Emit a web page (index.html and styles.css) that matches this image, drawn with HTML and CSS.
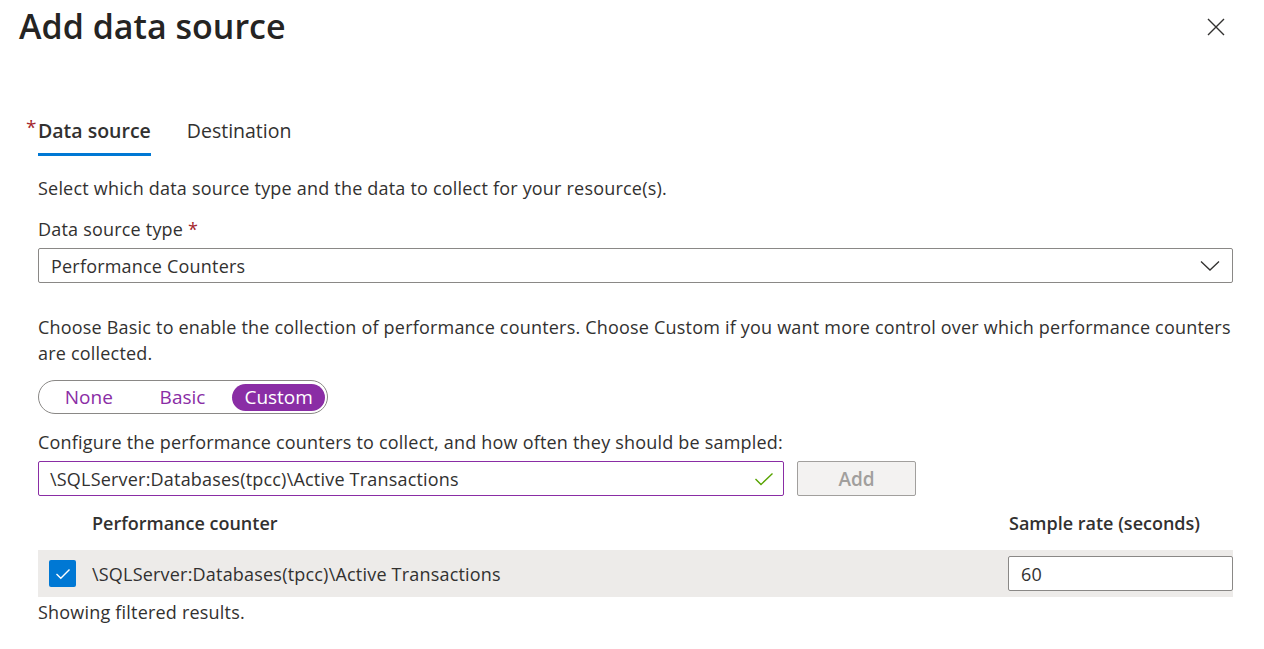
FILE: index.html
```html
<!DOCTYPE html>
<html>
<head>
<meta charset="utf-8">
<link rel="stylesheet" href="styles.css">
</head>
<body>
<div class="panel">
  <header class="head">
    <h1 class="title">Add data source</h1>
    <button class="close" aria-label="Close">
      <svg width="18" height="18" viewBox="0 0 18 18"><path d="M1 1L17 17M17 1L1 17" stroke="#323130" stroke-width="1.4" fill="none"/></svg>
    </button>
  </header>
  <div class="content">
    <nav class="tabs">
      <div class="tab active"><span class="req-tab">*</span>Data source</div>
      <div class="tab">Destination</div>
    </nav>
    <p class="desc">Select which data source type and the data to collect for your resource(s).</p>
    <label class="label">Data source type <span class="req">*</span></label>
    <div class="select">
      <span>Performance Counters</span>
      <svg width="20" height="12" viewBox="0 0 20 12"><path d="M1 1.5L10 10L19 1.5" stroke="#323130" stroke-width="1.3" fill="none"/></svg>
    </div>
    <p class="para">Choose Basic to enable the collection of performance counters. Choose Custom if you want more control over which performance counters are collected.</p>
    <div class="toggle">
      <span class="opt">None</span>
      <span class="opt">Basic</span>
      <span class="opt on">Custom</span>
    </div>
    <p class="cfg">Configure the performance counters to collect, and how often they should be sampled:</p>
    <div class="addrow">
      <div class="textinput">
        <span>\SQLServer:Databases(tpcc)\Active Transactions</span>
        <svg width="20" height="14" viewBox="0 0 20 14"><path d="M1.5 7L7 12.5L18.5 1.5" stroke="#57a300" stroke-width="1.4" fill="none"/></svg>
      </div>
      <button class="addbtn">Add</button>
    </div>
    <div class="thead">
      <span class="th-name">Performance counter</span>
      <span class="th-rate">Sample rate (seconds)</span>
    </div>
    <div class="trow">
      <span class="cb"><svg width="16" height="12" viewBox="0 0 16 12"><path d="M1.5 6L5.8 10.3L14.5 1.5" stroke="#fff" stroke-width="1.4" fill="none"/></svg></span>
      <span class="td-name">\SQLServer:Databases(tpcc)\Active Transactions</span>
      <div class="rate">60</div>
    </div>
    <p class="foot">Showing filtered results.</p>
  </div>
</div>
</body>
</html>
```

FILE: styles.css
```css
* { box-sizing: border-box; }
html, body { margin: 0; padding: 0; background: #fff; }
body {
  font-family: "Open Sans", "Noto Sans", sans-serif;
  font-size: 18px;
  letter-spacing: 0.2px;
  color: #323130;
  width: 1264px;
  height: 649px;
  overflow: hidden;
}
.panel { padding: 0 31px 0 0; }
.head {
  display: flex;
  justify-content: space-between;
  align-items: flex-start;
  height: 110px;
  padding-left: 19px;
}
.title {
  margin: 4px 0 0 0;
  font-size: 34px;
  font-weight: 600;
  color: #252423;
  letter-spacing: 0;
  line-height: 44px;
}
.close {
  border: 0;
  background: none;
  padding: 0;
  margin: 18px 8px 0 0;
  width: 18px;
  height: 18px;
  display: flex;
}
.content { padding-left: 38px; }
.tabs { display: flex; gap: 36px; height: 46px; }
.tab {
  position: relative;
  font-size: 19.5px;
  letter-spacing: 0;
  line-height: 42px;
  height: 46px;
  color: #323130;
}
.tab.active {
  font-weight: 600;
  border-bottom: 3px solid #0078d4;
}
.req-tab {
  position: absolute;
  left: -12px;
  top: -4px;
  color: #a4262c;
  font-weight: 400;
  font-size: 19px;
}
.desc { margin: 20px 0 0 0; line-height: 24px; }
.label { display: block; margin-top: 17px; line-height: 24px; }
.req { color: #a4262c; }
.select {
  margin-top: 7px;
  height: 35px;
  border: 1px solid #8a8886;
  border-radius: 2px;
  display: flex;
  align-items: center;
  justify-content: space-between;
  padding: 0 12px 0 12px;
}
.para { margin: 31px 0 0 0; line-height: 26px; }
.toggle {
  margin-top: 14px;
  width: 290px;
  height: 34px;
  border: 1px solid #8a8886;
  border-radius: 17px;
  display: flex;
  align-items: center;
  padding: 0 2px 0 6px;
}
.opt {
  color: #8a2da5;
  font-size: 19px;
  letter-spacing: 0;
  text-align: center;
  line-height: 27px;
  border-radius: 14px;
}
.opt:nth-child(1) { width: 88px; }
.opt:nth-child(2) { width: 100px; }
.opt.on { width: 93px; background: #8a2da5; color: #fff; }
.cfg { margin: 16px 0 0 0; line-height: 24px; }
.addrow { display: flex; gap: 13px; margin-top: 7px; }
.textinput {
  width: 746px;
  height: 35px;
  border: 1px solid #8a2da5;
  border-radius: 2px;
  display: flex;
  align-items: center;
  justify-content: space-between;
  padding: 0 9px 0 11px;
}
.addbtn {
  width: 119px;
  height: 35px;
  background: #f3f2f1;
  border: 1px solid #a19f9d;
  border-radius: 2px;
  color: #a19f9d;
  font-family: inherit;
  font-size: 19px;
  font-weight: 600;
  padding: 0;
}
.thead {
  display: flex;
  justify-content: space-between;
  height: 54px;
  align-items: center;
  font-weight: 600;
  letter-spacing: 0;
  padding-left: 54px;
}
.th-rate { width: 224px; }
.trow {
  height: 47px;
  background: #edebe9;
  display: flex;
  align-items: center;
  padding-left: 11px;
}
.cb {
  width: 27px;
  height: 27px;
  background: #0078d4;
  border-radius: 2px;
  display: flex;
  align-items: center;
  justify-content: center;
}
.td-name { margin-left: 16px; flex: 1; }
.rate {
  width: 225px;
  height: 35px;
  border: 1px solid #8a8886;
  border-radius: 2px;
  background: #fff;
  display: flex;
  align-items: center;
  padding-left: 12px;
}
.foot { margin: 3px 0 0 0; line-height: 24px; }
```
